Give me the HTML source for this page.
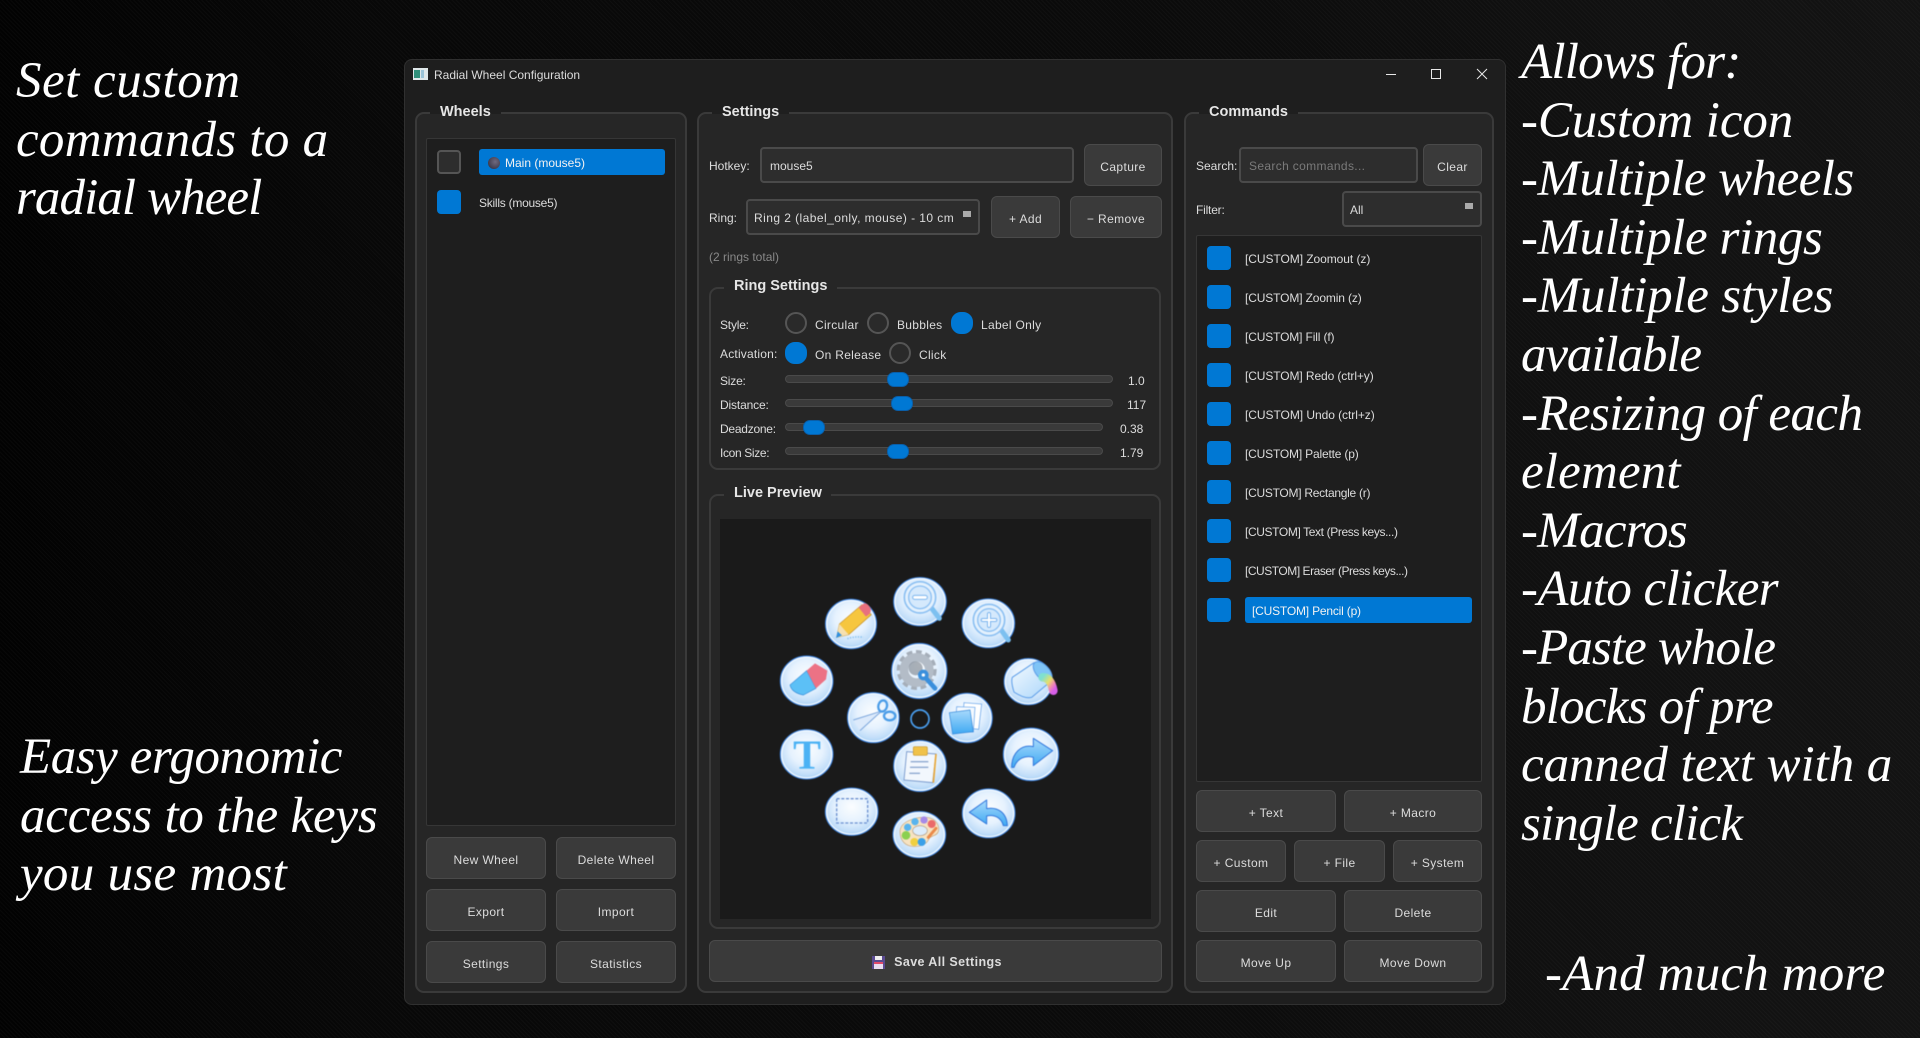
<!DOCTYPE html>
<html><head><meta charset="utf-8"><style>
html,body{margin:0;padding:0;width:1920px;height:1038px;overflow:hidden;background:#000}
body{position:relative;font-family:"Liberation Sans",sans-serif;font-size:12px;color:#dcdcdc}
#bg{position:absolute;inset:0;background:repeating-linear-gradient(45deg,rgba(255,255,255,.022) 0 1px,transparent 1px 3px),linear-gradient(90deg,#020202 0,#080808 20%,#0b0b0b 60%,#111 85%,#131313 100%)}
.a{position:absolute;box-sizing:border-box}
.t{position:absolute;line-height:16px;white-space:nowrap}
.big{position:absolute;font-family:"Liberation Serif",serif;font-style:italic;font-size:51px;line-height:58.6px;color:#fff;white-space:nowrap}
.w{position:absolute;left:404px;top:59px;width:1102px;height:946px;background:#1e1e1e;border:1px solid #303030;border-radius:8px;box-sizing:border-box}
.g{position:absolute;box-sizing:border-box;background:#262626;border:2px solid #3a3a3a;border-radius:9px}
.l{position:absolute;height:4px;background:#1f1f1f}
.h{position:absolute;font-weight:bold;font-size:14.5px;line-height:18px;color:#e6e6e6;white-space:nowrap}
.list{position:absolute;box-sizing:border-box;background:#1e1e1e;border:1px solid #363636;border-radius:2px}
.b{position:absolute;box-sizing:border-box;background:#3a3a3a;border:1px solid #4a4a4a;border-radius:6px;display:flex;align-items:center;justify-content:center;color:#dcdcdc;font-size:12px;letter-spacing:.4px;padding-top:3px;white-space:nowrap}
.i{position:absolute;box-sizing:border-box;background:#2d2d2d;border:2px solid #4a4a4a;border-radius:4px;line-height:32px;padding-left:8px;font-size:12px;padding-top:1px;white-space:nowrap;color:#dcdcdc}
.c{position:absolute;width:24px;height:24px;border-radius:4px;background:#0078d4;box-sizing:border-box}
.c.o{background:#2d2d2d;border:2px solid #555}
.r{position:absolute;width:22px;height:22px;border-radius:50%;box-sizing:border-box;border:2px solid #555;background:#2a2a2a}
.r.on{background:#0078d4;border-color:#0078d4;border-radius:10px}
.tr{position:absolute;height:8px;background:#3a3a3a;border:1px solid #4a4a4a;box-sizing:border-box;border-radius:4px}
.th{position:absolute;width:22px;height:15px;border-radius:7px;background:#0078d4;border:1px solid #0a5ea8;box-sizing:border-box}
.ar{position:absolute;width:8px;height:6px;background:#aaa}
.sp{letter-spacing:.3px}
</style></head><body>
<div id="bg"></div>

<div class="big" style="left:16px;top:52px"><span style="letter-spacing:.5px">Set custom</span><br><span style="letter-spacing:.28px">commands to a</span><br><span style="letter-spacing:-.92px">radial wheel</span></div>
<div class="big" style="left:20px;top:728px"><span style="letter-spacing:-.44px">Easy ergonomic</span><br><span style="letter-spacing:-.2px">access to the keys</span><br><span style="letter-spacing:.3px">you use most</span></div>
<div class="big" style="left:1521px;top:33px"><span style="letter-spacing:-.78px">Allows for:</span><br><span style="letter-spacing:-.1px">-Custom icon</span><br><span style="letter-spacing:-.54px">-Multiple wheels</span><br><span style="letter-spacing:-.4px">-Multiple rings</span><br><span style="letter-spacing:-.23px">-Multiple styles</span><br><span style="letter-spacing:-1.1px">available</span><br><span style="letter-spacing:-.58px">-Resizing of each</span><br><span style="letter-spacing:.17px">element</span><br><span style="letter-spacing:-.7px">-Macros</span><br><span style="letter-spacing:-.6px">-Auto clicker</span><br><span style="letter-spacing:-.9px">-Paste whole</span><br><span style="letter-spacing:-.75px">blocks of pre</span><br><span style="letter-spacing:-.07px">canned text with a</span><br><span style="letter-spacing:-.8px">single click</span></div>
<div class="big" style="left:1545px;top:945px;letter-spacing:.17px">-And much more</div>

<div class="w"></div>
<svg class="a" style="left:413px;top:68px" width="15" height="12" viewBox="0 0 15 12"><rect width="15" height="12" fill="#dfe8ea"/><rect x="1" y="2" width="6" height="8" fill="#2f8f7a"/><rect x="8" y="2" width="3" height="8" fill="#9bc4d8"/></svg>
<div class="t" style="left:434px;top:67px">Radial Wheel Configuration</div>
<svg class="a" style="left:1380px;top:64px" width="115" height="22" viewBox="0 0 115 22" fill="none" stroke="#e8e8e8" stroke-width="1"><path d="M6 10.500H16"/><rect x="51.500" y="5.500" width="9" height="9"/><path d="M97 5L107 15M107 5L97 15"/></svg>

<!-- Wheels -->
<div class="g" style="left:415px;top:112px;width:272px;height:881px"></div>
<div class="l" style="left:430px;top:110px;width:71px"></div>
<div class="h" style="left:440px;top:103px">Wheels</div>
<div class="list" style="left:426px;top:138px;width:250px;height:688px"></div>
<div class="c o" style="left:437px;top:150px"></div>
<div class="a" style="left:479px;top:149px;width:186px;height:26px;background:#0078d4;border-radius:3px"></div>
<div class="a" style="left:488px;top:157px;width:12px;height:12px;border-radius:50%;background:radial-gradient(circle at 60% 40%,#6f6a80,#2c2838)"></div>
<div class="t" style="left:505px;top:155px;color:#f2f2f2">Main (mouse5)</div>
<div class="c" style="left:437px;top:190px"></div>
<div class="t" style="left:479px;top:195px;letter-spacing:-.25px">Skills (mouse5)</div>
<div class="b" style="left:426px;top:837px;width:120px;height:42px">New Wheel</div>
<div class="b" style="left:556px;top:837px;width:120px;height:42px">Delete Wheel</div>
<div class="b" style="left:426px;top:889px;width:120px;height:42px">Export</div>
<div class="b" style="left:556px;top:889px;width:120px;height:42px">Import</div>
<div class="b" style="left:426px;top:941px;width:120px;height:42px">Settings</div>
<div class="b" style="left:556px;top:941px;width:120px;height:42px">Statistics</div>

<!-- Settings -->
<div class="g" style="left:697px;top:112px;width:476px;height:881px"></div>
<div class="l" style="left:712px;top:110px;width:77px"></div>
<div class="h" style="left:722px;top:103px">Settings</div>
<div class="t" style="left:709px;top:158px">Hotkey:</div>
<div class="i" style="left:760px;top:147px;width:314px;height:36px">mouse5</div>
<div class="b" style="left:1084px;top:144px;width:78px;height:42px">Capture</div>
<div class="t" style="left:709px;top:210px">Ring:</div>
<div class="i" style="left:746px;top:199px;width:234px;height:36px;padding-left:6px;letter-spacing:.44px">Ring 2 (label_only, mouse) - 10 cm</div>
<div class="ar" style="left:963px;top:211px"></div>
<div class="b" style="left:991px;top:196px;width:69px;height:42px">+ Add</div>
<div class="b" style="left:1070px;top:196px;width:92px;height:42px">&minus; Remove</div>
<div class="t" style="left:709px;top:249px;color:#888">(2 rings total)</div>

<div class="g" style="left:709px;top:287px;width:452px;height:183px"></div>
<div class="l" style="left:724px;top:285px;width:113px;background:#262626"></div>
<div class="h" style="left:734px;top:277px">Ring Settings</div>
<div class="t" style="left:720px;top:317px;letter-spacing:-.2px">Style:</div>
<div class="r" style="left:785px;top:312px"></div><div class="t sp" style="left:815px;top:317px">Circular</div>
<div class="r" style="left:867px;top:312px"></div><div class="t sp" style="left:897px;top:317px">Bubbles</div>
<div class="r on" style="left:951px;top:312px"></div><div class="t sp" style="left:981px;top:317px">Label Only</div>
<div class="t" style="left:720px;top:346px;letter-spacing:.2px">Activation:</div>
<div class="r on" style="left:785px;top:342px"></div><div class="t sp" style="left:815px;top:347px">On Release</div>
<div class="r" style="left:889px;top:342px"></div><div class="t sp" style="left:919px;top:347px">Click</div>

<div class="t" style="left:720px;top:373px;letter-spacing:-.2px">Size:</div>
<div class="tr" style="left:785px;top:375px;width:328px"></div><div class="th" style="left:887px;top:372px"></div>
<div class="t" style="left:1128px;top:373px">1.0</div>
<div class="t" style="left:720px;top:397px;letter-spacing:-.15px">Distance:</div>
<div class="tr" style="left:785px;top:399px;width:328px"></div><div class="th" style="left:891px;top:396px"></div>
<div class="t" style="left:1127px;top:397px">117</div>
<div class="t" style="left:720px;top:421px;letter-spacing:-.25px">Deadzone:</div>
<div class="tr" style="left:785px;top:423px;width:318px"></div><div class="th" style="left:803px;top:420px"></div>
<div class="t" style="left:1120px;top:421px">0.38</div>
<div class="t" style="left:720px;top:445px;letter-spacing:-.35px">Icon Size:</div>
<div class="tr" style="left:785px;top:447px;width:318px"></div><div class="th" style="left:887px;top:444px"></div>
<div class="t" style="left:1120px;top:445px">1.79</div>

<div class="g" style="left:709px;top:494px;width:452px;height:435px"></div>
<div class="l" style="left:724px;top:492px;width:107px;background:#262626"></div>
<div class="h" style="left:734px;top:484px">Live Preview</div>
<div class="a" style="left:720px;top:519px;width:431px;height:400px;background:#1a1a1a"></div>

<svg class="a" style="left:760px;top:560px;filter:blur(.45px)" width="320" height="320" viewBox="0 0 960 960">
<defs>
<radialGradient id="bu" cx=".5" cy=".4" r=".62"><stop offset="0" stop-color="#fbfdff"/><stop offset=".5" stop-color="#e6f2fe"/><stop offset=".82" stop-color="#c2def9"/><stop offset="1" stop-color="#9dccf7"/></radialGradient>
<linearGradient id="bl" x1="0" y1="0" x2="0" y2="1"><stop offset="0" stop-color="#a8dafc"/><stop offset="1" stop-color="#3fa8f2"/></linearGradient>
<linearGradient id="bk" x1="0" y1="0" x2="1" y2="1"><stop offset="0" stop-color="#f4faff"/><stop offset="1" stop-color="#a9d5fa"/></linearGradient>
<linearGradient id="rb" x1="0" y1="0" x2="1" y2="1"><stop offset="0" stop-color="#7fe0d0"/><stop offset=".45" stop-color="#e7e06a"/><stop offset=".75" stop-color="#f08ab0"/><stop offset="1" stop-color="#d85ee8"/></linearGradient>
<g id="b"><circle r="79" fill="url(#bu)" stroke="#3a84e6" stroke-width="3"/><circle r="75" fill="none" stroke="#f4faff" stroke-width="4"/></g>
</defs>
<g transform="translate(480,125) scale(1,.92)"><use href="#b"/></g>
<g transform="translate(685,190) scale(1,.93)"><use href="#b"/></g>
<g transform="translate(273,192) scale(.97,.94)"><use href="#b"/></g>
<g transform="translate(478,333) scale(1.05)"><use href="#b"/></g>
<g transform="translate(805,365) scale(.92,.88)"><use href="#b"/></g>
<g transform="translate(140,363) scale(1,.95)"><use href="#b"/></g>
<g transform="translate(340,473) scale(.98,.95)"><use href="#b"/></g>
<g transform="translate(621,474) scale(.96,.94)"><use href="#b"/></g>
<g transform="translate(140,583) scale(1,.94)"><use href="#b"/></g>
<g transform="translate(813,583) scale(1.05,1)"><use href="#b"/></g>
<g transform="translate(480,618) scale(1,.97)"><use href="#b"/></g>
<g transform="translate(275,755) scale(1,.9)"><use href="#b"/></g>
<g transform="translate(686,760) scale(1,.93)"><use href="#b"/></g>
<g transform="translate(478,824) scale(1,.88)"><use href="#b"/></g>
<circle cx="480" cy="477" r="27" fill="none" stroke="#4a9ff0" stroke-width="5"/>

<!-- zoomout -->
<path d="M515 145L538 175" stroke="#7cc0f0" stroke-width="15" stroke-linecap="round"/>
<circle cx="480" cy="112" r="47" fill="#e4f1fd" stroke="#8cc0f2" stroke-width="5"/><circle cx="480" cy="112" r="34" fill="#d5e9fc" stroke="#8dc0f2" stroke-width="4"/>
<rect x="458" y="106" width="44" height="12" rx="6" fill="#fff" stroke="#7ab4ee" stroke-width="3"/>
<!-- zoomin -->
<path d="M720 205L745 240" stroke="#7cc0f0" stroke-width="15" stroke-linecap="round"/>
<circle cx="687" cy="180" r="47" fill="#e4f1fd" stroke="#8cc0f2" stroke-width="5"/><circle cx="687" cy="180" r="34" fill="#d5e9fc" stroke="#8dc0f2" stroke-width="4"/>
<path d="M668 180H706M687 162V198" stroke="#7ab4ee" stroke-width="12" stroke-linecap="round"/><path d="M668 180H706M687 162V198" stroke="#fff" stroke-width="6" stroke-linecap="round"/>
<!-- pencil -->
<path d="M230 232L238 192L306 134L334 164L266 224Z" fill="#f6c63f" stroke="#c99024" stroke-width="2"/>
<path d="M230 232L238 192L266 224Z" fill="#f6e0b0"/><path d="M228 234L233 214L246 226Z" fill="#2f8fe0"/>
<path d="M296 143L312 130Q322 128 332 145Q334 155 328 162L318 170Z" fill="#e8707e"/>
<path d="M262 236Q285 228 310 232" stroke="#8cc4f0" stroke-width="5" stroke-dasharray="4 4" fill="none"/>
<!-- eraser -->
<path d="M90 375L140 332L168 385L130 405Q95 398 90 375Z" fill="#5cc0f6" stroke="#3a90dc" stroke-width="2"/>
<path d="M140 332L165 310L202 332L198 358L168 385Z" fill="#ec7285"/>
<!-- gear -->
<circle cx="470" cy="330" r="54" fill="none" stroke="#a5aeb9" stroke-width="12" stroke-dasharray="17 11"/>
<circle cx="470" cy="330" r="38" fill="none" stroke="#b3bcc7" stroke-width="26"/>
<circle cx="467" cy="325" r="21" fill="#5a6470" opacity=".5"/>
<path d="M492 348L525 385" stroke="#3a8fdc" stroke-width="14" stroke-linecap="round"/><circle cx="490" cy="345" r="16" fill="#3a8fdc"/><circle cx="490" cy="345" r="5" fill="#fff"/>
<!-- bucket -->
<path d="M822 308L757 352Q752 365 762 396Q795 418 815 412L875 362Z" fill="url(#bk)" stroke="#5a9ce8" stroke-width="3" stroke-linejoin="round"/>
<ellipse cx="848" cy="335" rx="20" ry="36" transform="rotate(-42 848 335)" fill="#7fc4f6" stroke="#5a9ce8" stroke-width="3"/>
<path d="M848 352Q872 352 880 392" fill="none" stroke="url(#rb)" stroke-width="26" stroke-linecap="round"/>
<!-- scissors -->
<path d="M280 480L368 452L355 462L300 512" fill="#dceafb" stroke="#7ba6dc" stroke-width="3"/>
<ellipse cx="368" cy="438" rx="13" ry="17" transform="rotate(15 368 438)" fill="none" stroke="#4b9de8" stroke-width="7"/><ellipse cx="389" cy="468" rx="17" ry="13" fill="none" stroke="#4b9de8" stroke-width="7"/>
<!-- copy -->
<path d="M612 428L665 432L656 508L606 502Z" fill="#fff" stroke="#5a9ce8" stroke-width="2"/>
<path d="M590 440L645 442L640 516L585 512Z" fill="#f5faff" stroke="#5a9ce8" stroke-width="2"/>
<path d="M568 458L630 450L640 515L578 522Z" fill="url(#bl)" stroke="#2f84d8" stroke-width="2"/>
<!-- T -->
<text x="141" y="625" text-anchor="middle" font-family="Liberation Serif,serif" font-weight="bold" font-size="125" fill="#4bb2f4">T</text>
<!-- redo -->
<path d="M755 622C755 578 785 552 820 560L820 535L878 572L820 617L820 592C795 585 772 595 762 622Z" fill="url(#bl)" stroke="#3076dc" stroke-width="3" stroke-linejoin="round"/>
<!-- clipboard -->
<path d="M440 575L528 582L518 668L432 660Z" fill="#f2f7fd" stroke="#7f9fd0" stroke-width="3"/>
<path d="M528 582L520 668" stroke="#e8a83a" stroke-width="5"/>
<rect x="460" y="560" width="42" height="26" rx="4" fill="#f0c24a" stroke="#c8962a" stroke-width="2"/>
<path d="M452 605H505M450 622H505M448 640H480" stroke="#8da8d0" stroke-width="4"/>
<!-- rect -->
<rect x="230" y="716" width="93" height="73" fill="none" stroke="#6a8fd0" stroke-width="4" stroke-dasharray="9 5"/>
<!-- undo -->
<path d="M742 797C740 755 710 740 680 746L680 720L628 757L680 792L680 768C705 762 725 775 730 797Z" fill="url(#bl)" stroke="#3076dc" stroke-width="3" stroke-linejoin="round"/>
<!-- palette -->
<path d="M420 815C420 785 465 770 500 772C530 775 540 800 535 815C530 830 510 825 505 840C495 865 420 875 420 815Z" fill="#f7e3c2" stroke="#c4a47a" stroke-width="2"/>
<ellipse cx="480" cy="812" rx="22" ry="15" fill="#dcecfb" stroke="#b09a80" stroke-width="2"/>
<circle cx="443" cy="802" r="11" fill="#58b4ee"/><circle cx="465" cy="785" r="11" fill="#58b4ee"/><circle cx="492" cy="780" r="11" fill="#a68ae8"/><circle cx="515" cy="792" r="12" fill="#ea6a6a"/><circle cx="438" cy="826" r="13" fill="#8bd050"/><circle cx="463" cy="846" r="12" fill="#f0d040"/><circle cx="485" cy="846" r="12" fill="#3aa0e8"/>
<path d="M528 805L505 832" stroke="#ea8a4a" stroke-width="9" stroke-linecap="round"/>
</svg>

<div class="b" style="left:709px;top:940px;width:453px;height:42px;font-weight:bold;font-size:12.500px;padding-top:2px;padding-left:3px"><svg width="13" height="13" viewBox="0 0 13 13" style="margin-right:9px"><rect width="13" height="13" fill="#5a4a90"/><rect x="3" y="0" width="7" height="4" fill="#eee"/><rect x="2" y="6" width="9" height="7" fill="#e8dcf0"/><rect x="2" y="6" width="9" height="2" fill="#e04a6a"/></svg>Save All Settings</div>

<!-- Commands -->
<div class="g" style="left:1184px;top:112px;width:310px;height:881px"></div>
<div class="l" style="left:1199px;top:110px;width:99px"></div>
<div class="h" style="left:1209px;top:103px">Commands</div>
<div class="t" style="left:1196px;top:158px">Search:</div>
<div class="i" style="left:1239px;top:147px;width:179px;height:36px;color:#7a7a7a;letter-spacing:.35px">Search commands...</div>
<div class="b" style="left:1423px;top:144px;width:59px;height:42px">Clear</div>
<div class="t" style="left:1196px;top:202px;letter-spacing:-.2px">Filter:</div>
<div class="i" style="left:1342px;top:191px;width:140px;height:36px;padding-left:6px">All</div>
<div class="ar" style="left:1465px;top:203px"></div>
<div class="list" style="left:1196px;top:235px;width:286px;height:547px"></div>

<div class="c" style="left:1207px;top:246px"></div><div class="t" style="left:1245px;top:251px;letter-spacing:-.06px">[CUSTOM] Zoomout (z)</div>
<div class="c" style="left:1207px;top:285px"></div><div class="t" style="left:1245px;top:290px;letter-spacing:-.13px">[CUSTOM] Zoomin (z)</div>
<div class="c" style="left:1207px;top:324px"></div><div class="t" style="left:1245px;top:329px;letter-spacing:-.14px">[CUSTOM] Fill (f)</div>
<div class="c" style="left:1207px;top:363px"></div><div class="t" style="left:1245px;top:368px;letter-spacing:-.1px">[CUSTOM] Redo (ctrl+y)</div>
<div class="c" style="left:1207px;top:402px"></div><div class="t" style="left:1245px;top:407px;letter-spacing:-.05px">[CUSTOM] Undo (ctrl+z)</div>
<div class="c" style="left:1207px;top:441px"></div><div class="t" style="left:1245px;top:446px;letter-spacing:-.18px">[CUSTOM] Palette (p)</div>
<div class="c" style="left:1207px;top:480px"></div><div class="t" style="left:1245px;top:485px;letter-spacing:-.27px">[CUSTOM] Rectangle (r)</div>
<div class="c" style="left:1207px;top:519px"></div><div class="t" style="left:1245px;top:524px;letter-spacing:-.38px">[CUSTOM] Text (Press keys...)</div>
<div class="c" style="left:1207px;top:558px"></div><div class="t" style="left:1245px;top:563px;letter-spacing:-.47px">[CUSTOM] Eraser (Press keys...)</div>
<div class="c" style="left:1207px;top:598px"></div>
<div class="a" style="left:1245px;top:597px;width:227px;height:26px;background:#0078d4;border-radius:3px"></div>
<div class="t" style="left:1252px;top:603px;color:#f2f2f2;letter-spacing:-.19px">[CUSTOM] Pencil (p)</div>

<div class="b" style="left:1196px;top:790px;width:140px;height:42px">+ Text</div>
<div class="b" style="left:1344px;top:790px;width:138px;height:42px">+ Macro</div>
<div class="b" style="left:1196px;top:840px;width:90px;height:42px">+ Custom</div>
<div class="b" style="left:1294px;top:840px;width:91px;height:42px">+ File</div>
<div class="b" style="left:1393px;top:840px;width:89px;height:42px">+ System</div>
<div class="b" style="left:1196px;top:890px;width:140px;height:42px">Edit</div>
<div class="b" style="left:1344px;top:890px;width:138px;height:42px">Delete</div>
<div class="b" style="left:1196px;top:940px;width:140px;height:42px">Move Up</div>
<div class="b" style="left:1344px;top:940px;width:138px;height:42px">Move Down</div>
</body></html>
